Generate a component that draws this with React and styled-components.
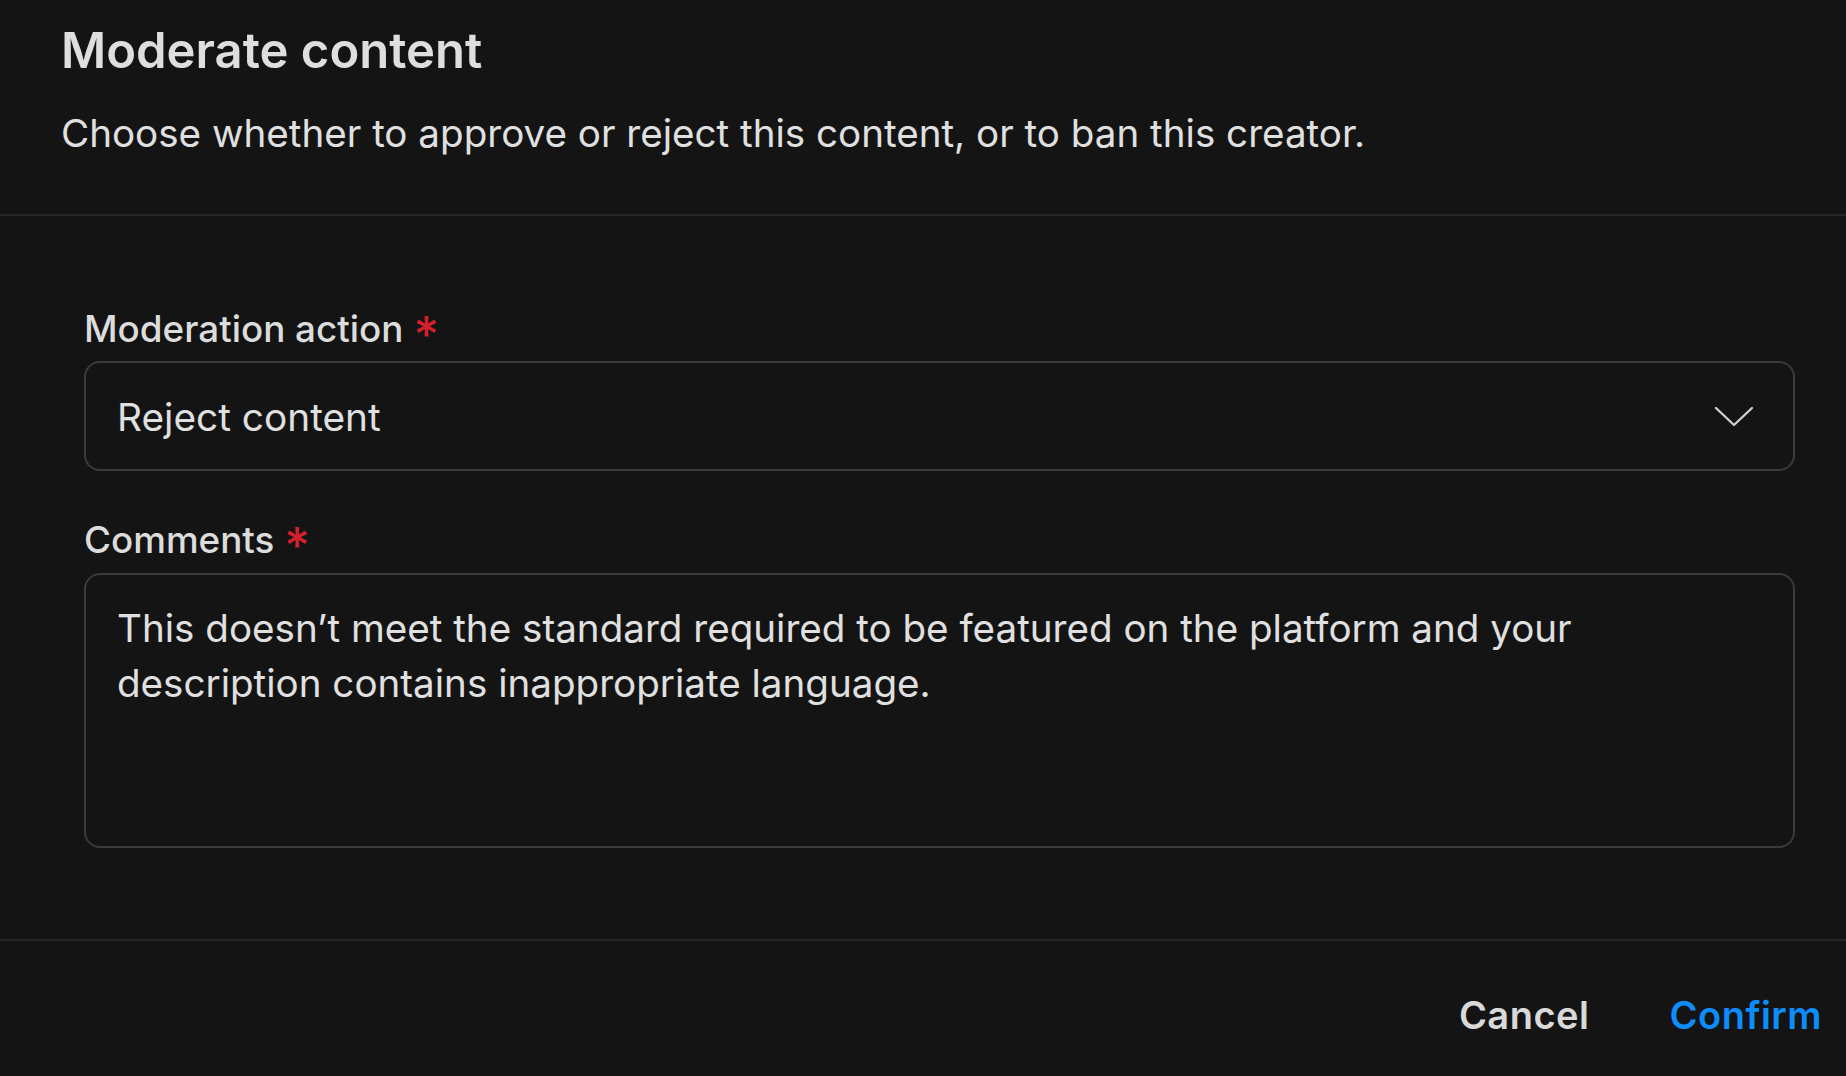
import React, { useState } from "react"
import styled, { createGlobalStyle } from "styled-components"

const GlobalStyle = createGlobalStyle`
	html, body {
		margin: 0;
		padding: 0;
		background: #141414;
	}
	body {
		font-family: Inter, "Noto Sans", sans-serif;
		color: #e2e2e2;
		-webkit-font-smoothing: antialiased;
	}
`

const Dialog = styled.div`
	width: 1846px;
	height: 1076px;
	display: flex;
	flex-direction: column;
	background: #141414;
	overflow: hidden;
`
const Header = styled.header`
	padding: 16px 61px 0;
	height: 198px;
	border-bottom: 2px solid #262626;
`
const Title = styled.h1`
	margin: 0;
	font-size: 49px;
	line-height: 70px;
	font-weight: 600;
	color: #dedede;
`
const Subtitle = styled.p`
	margin: 22px 0 0;
	font-size: 38.6px;
	line-height: 50px;
	color: #e0e0e0;
`
const Body = styled.div`
	flex: 1;
	display: flex;
	flex-direction: column;
	padding: 90px 51px 0 84px;
	border-bottom: 2px solid #262626;
`
const Field = styled.label`
	display: flex;
	flex-direction: column;
	gap: ${(p) => p.$gap || 11}px;
	margin-bottom: ${(p) => p.$after || 0}px;
`
const LabelText = styled.span`
	display: flex;
	align-items: center;
	height: 44px;
	font-size: 36.8px;
	font-weight: 500;
	color: #dcdcdc;
`
const Required = styled.span`
	color: #d5202b;
	margin-left: 10px;
	font-size: 50px;
	line-height: 1;
	transform: translateY(6px);
`
const SelectBox = styled.div`
	height: 110px;
	box-sizing: border-box;
	border: 2px solid #3b3b3b;
	border-radius: 16px;
	display: flex;
	align-items: center;
	padding: 0 38px 0 31px;
`
const SelectValue = styled.span`
	flex: 1;
	font-size: 38.8px;
	color: #e0e0e0;
`
const Chevron = styled.svg`
	width: 42px;
	height: 24px;
	flex: none;
`
const TextArea = styled.textarea`
	height: 275px;
	box-sizing: border-box;
	border: 2px solid #3b3b3b;
	border-radius: 16px;
	background: transparent;
	padding: 26px 31px 0 31px;
	font-family: Inter, "Noto Sans", sans-serif;
	font-size: 38.6px;
	line-height: 55px;
	color: #e0e0e0;
	resize: none;
	outline: none;
`
const Footer = styled.footer`
	height: 135px;
	display: flex;
	justify-content: flex-end;
	align-items: center;
	gap: 80px;
	padding: 12px 24px 0 0;
	box-sizing: border-box;
`
const TextButton = styled.button`
	background: none;
	border: none;
	padding: 0;
	font-family: Inter, "Noto Sans", sans-serif;
	font-size: 38px;
	font-weight: 600;
	letter-spacing: 0.5px;
	color: ${(p) => (p.$primary ? "#0c8dfb" : "#d9d9d9")};
	cursor: pointer;
`

export default function App() {
	const [comment, setComment] = useState(
		"This doesn\u2019t meet the standard required to be featured on the platform and your description contains inappropriate language."
	)

	return (
		<Dialog>
			<GlobalStyle />
			<Header>
				<Title>Moderate content</Title>
				<Subtitle>Choose whether to approve or reject this content, or to ban this creator.</Subtitle>
			</Header>
			<Body>
				<Field $after={46}>
					<LabelText>
						Moderation action<Required>*</Required>
					</LabelText>
					<SelectBox>
						<SelectValue>Reject content</SelectValue>
						<Chevron viewBox="0 0 42 24" fill="none">
							<path d="M3 4l18 17L39 4" stroke="#cfcfcf" strokeWidth="2.4" strokeLinecap="round" strokeLinejoin="round" />
						</Chevron>
					</SelectBox>
				</Field>
				<Field $gap={12}>
					<LabelText>
						Comments<Required>*</Required>
					</LabelText>
					<TextArea value={comment} onChange={(e) => setComment(e.target.value)} />
				</Field>
			</Body>
			<Footer>
				<TextButton>Cancel</TextButton>
				<TextButton $primary>Confirm</TextButton>
			</Footer>
		</Dialog>
	)
}
